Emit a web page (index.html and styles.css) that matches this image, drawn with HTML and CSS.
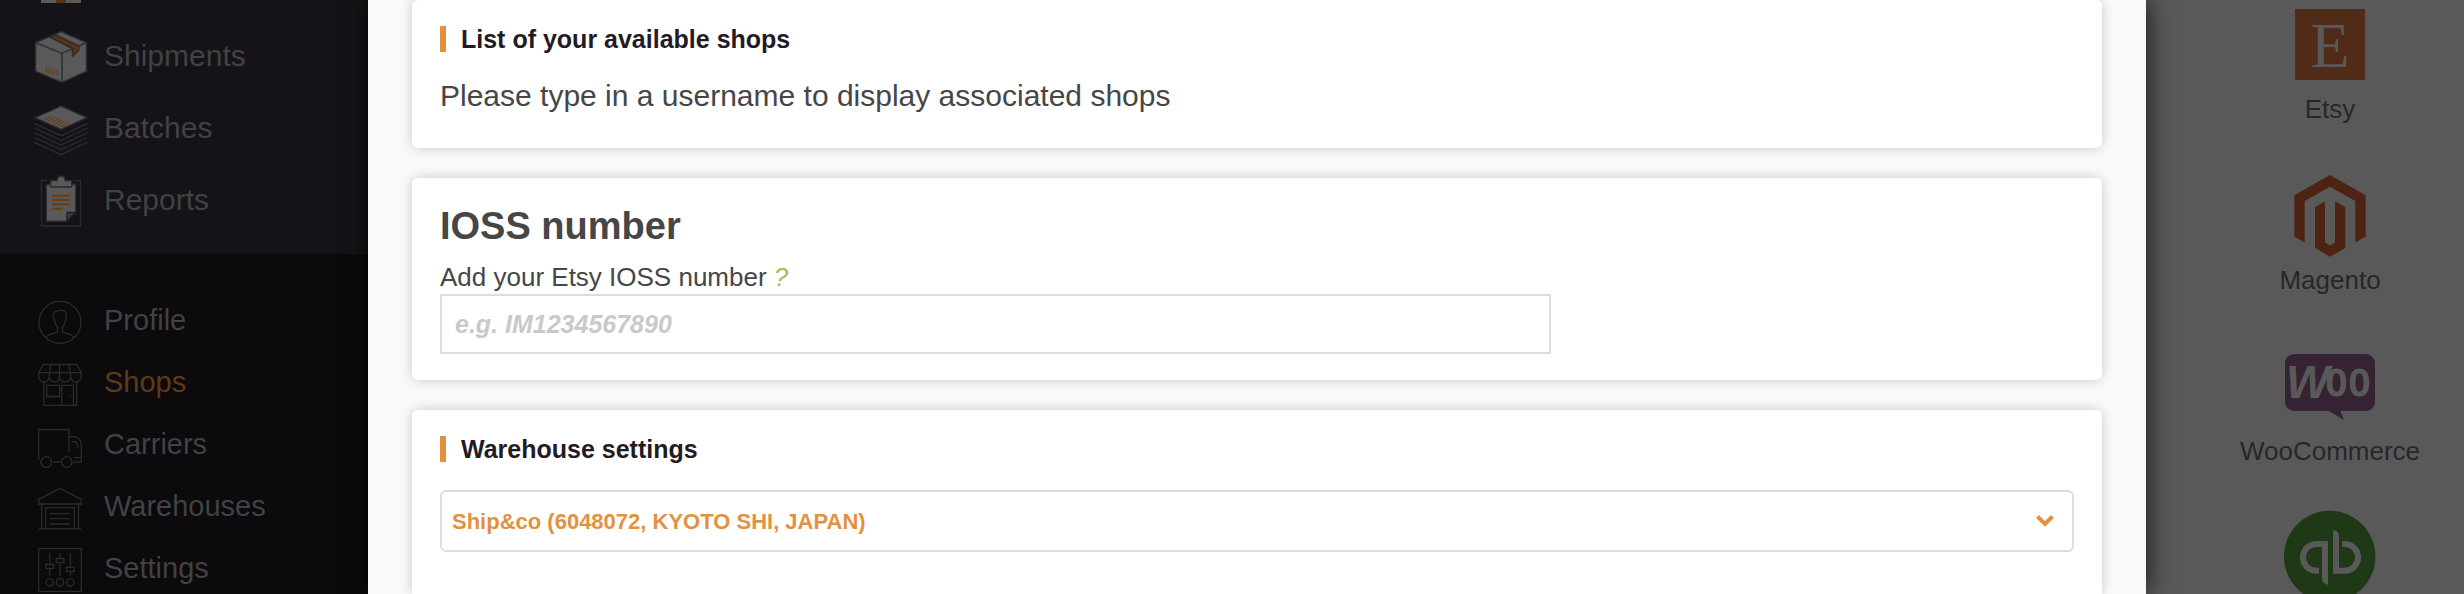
FILE: index.html
```html
<!DOCTYPE html>
<html lang="en">
<head>
  <meta charset="UTF-8">
  <title>Shops</title>
  <meta name="viewport" content="width=device-width, initial-scale=1.0">
  <link rel="stylesheet" href="styles.css">
</head>
<body>
  <div class="page">
    <nav class="sidebar">
      <div class="menu menu-main">
        <a href="#" class="menu-item menu-item-cut" aria-label="Orders">
          <svg class="icon" width="54" height="21" viewBox="0 0 54 21">
            <path class="paper" d="M7 0h40v3H7z"/>
            <path class="tape" d="M22 0h10v3H22z"/>
          </svg>
        </a>
        <a href="#" class="menu-item">
          <svg class="icon" width="54" height="54" viewBox="0 0 54 54">
            <path class="paper edge" d="M27 1.5 52.5 12.7V41.3L28 52.5 1.5 41.3V12.7z"/>
            <path class="edge" d="M1.5 12.7 28 23.3 52.5 12.7M28 23.3V52.5"/>
            <path class="tape edge" d="M16 7.2 21.500 4.8 45 16 44.5 21 38.5 26V18.5z"/>
            <path class="bars" d="M12.5 37v6M15 37.7v6M17.7 38.6v6M20.4 39.4v6M23.2 40v6"/>
          </svg>
          <span>Shipments</span>
        </a>
        <a href="#" class="menu-item">
          <svg class="icon" width="54" height="54" viewBox="0 0 54 54">
            <path class="line" d="M.5 21.3 27 33.7 53.5 21.3M.5 26 27 38.4 53.5 26M.5 30.7 27 43.1 53.5 30.7M.5 35.5 27 47.9 53.5 35.5M.5 40.3 27 52.7 53.5 40.3"/>
            <path class="paper edge" d="M27 4 53 15.7 27 27.5 1 15.7z"/>
            <path class="bars" d="M10.5 17.7 18 13.7M13.8 19.2l7.5-4M17.1 20.6l7.5-4M20.4 22.1l7.5-4M23.7 23.5l7.5-4M27.3 25l7.5-4"/>
          </svg>
          <span>Batches</span>
        </a>
        <a href="#" class="menu-item">
          <svg class="icon" width="54" height="54" viewBox="0 0 54 54">
            <path class="line" d="M13 6.5H7.5V52h39V6.5H41"/>
            <path class="paper edge" d="M12.3 10.5H41.7V38L33 47.3H12.3z"/>
            <path class="fold" d="M33 47.3V38.5H41.7z"/>
            <path class="paper edge" d="M16.7 6.5h6.5a4 4.5 0 0 1 8 0h6.5v6.5h-21z"/>
            <path class="bars rows" d="M18 21.7H36M18 26H36M18 30.3H36M18 34.7H28.7"/>
          </svg>
          <span>Reports</span>
        </a>
      </div>
      <div class="menu menu-account">
        <a href="#" class="menu-item">
          <svg class="icon" width="44" height="48" viewBox="0 0 44 48">
            <circle class="line" cx="22" cy="25.3" r="21"/>
            <path class="line" d="M7.7 40.3C11 37 16 36.5 19.5 35V30C17.5 28 16.8 25 16.5 22.5 15 21.5 15 20 15.7 19 14.5 15 17 14.5 18.5 14.3 21 13 25 13 27 14.5 29 15.500 28.5 18 28 19 29 20.5 28 22 27.5 22.5 27 26 26 28.500 24.3 30V35C28 36.5 33 37 36 40.3"/>
          </svg>
          <span>Profile</span>
        </a>
        <a href="#" class="menu-item active">
          <svg class="icon" width="44" height="48" viewBox="0 0 44 48">
            <path class="line" d="M5.5 5.5H38.5L43.3 13.7H.7zM13 5.5 11.3 13.7M21.5 5.5V13.7M30.5 5.5 32.5 13.7"/>
            <path class="line" d="M.7 13.7V17a5.3 5.5 0 0 0 10.6 1 5.1 5 0 0 0 10.2 0 5.4 5 0 0 0 11 0 5.4 5.5 0 0 0 10.8-1V13.7M11.3 13.7V18M21.5 13.7V18M32.5 13.7V18"/>
            <path class="line" d="M5.7 22V46.3H38.7V22M8.7 26.3H21.5V37.5H8.7zM23.7 46V26.3H35.5V46M32 37v1.5"/>
          </svg>
          <span>Shops</span>
        </a>
        <a href="#" class="menu-item">
          <svg class="icon" width="44" height="48" viewBox="0 0 44 48">
            <path class="line" d="M.7 39V8.5H31V31M31 15.7H35.5Q43.3 16 43.3 24V41H35.5M35.5 36.7H43M33.5 20.7H36Q39.7 21 39.7 27M15.3 41H22"/>
            <circle class="line" cx="8.3" cy="41" r="5.3"/>
            <circle class="line" cx="28.7" cy="41" r="5.3"/>
          </svg>
          <span>Carriers</span>
        </a>
        <a href="#" class="menu-item">
          <svg class="icon" width="44" height="48" viewBox="0 0 44 48">
            <path class="line" d="M22 5.3 43.3 16.3V21H.7V16.3zM3.7 21V45.7M40.5 21V45.7M1 45.7H43"/>
            <path class="line" d="M7.7 45.5V24.7H36.3V45.5M12 30.7H31.7M12 35.7H31.7M12 41H31.7"/>
          </svg>
          <span>Warehouses</span>
        </a>
        <a href="#" class="menu-item">
          <svg class="icon" width="44" height="48" viewBox="0 0 44 48">
            <rect class="line" x=".7" y="3.5" width="42.6" height="43"/>
            <path class="line" d="M11.7 8V19M11.7 23.5V30.7M22 8V13.5M22 17.5V30.7M32.3 8V22M32.3 26.5V30.7"/>
            <path class="line" d="M8 19.3h7.5v4H8zM18.3 13.5h7.5v4h-7.5zM28.6 22.3h7.5v4h-7.5z"/>
            <circle class="line" cx="11.7" cy="37.3" r="3.7"/>
            <circle class="line" cx="22" cy="37.3" r="3.7"/>
            <circle class="line" cx="32.3" cy="37.3" r="3.7"/>
          </svg>
          <span>Settings</span>
        </a>
      </div>
    </nav>

    <main class="modal">
      <section class="card">
        <h2 class="card-title">List of your available shops</h2>
        <p class="card-text">Please type in a username to display associated shops</p>
      </section>

      <section class="card">
        <h1 class="card-heading">IOSS number</h1>
        <label class="field-label" for="ioss">Add your Etsy IOSS number <em class="help">?</em></label>
        <input class="field-input" type="text" id="ioss" placeholder="e.g. IM1234567890">
      </section>

      <section class="card">
        <h2 class="card-title" id="warehouse-title">Warehouse settings</h2>
        <div class="select-box">
          <select class="select" aria-labelledby="warehouse-title">
            <option>Ship&amp;co (6048072, KYOTO SHI, JAPAN)</option>
          </select>
          <svg class="chevron" width="20" height="14" viewBox="0 0 20 14">
            <path d="M2.5 2.5 10 10 17.5 2.5"/>
          </svg>
        </div>
      </section>
    </main>

    <aside class="channels">
      <a href="#" class="channel">
        <svg class="logo" width="92" height="92" viewBox="0 0 92 92">
          <rect class="etsy" x="11" y="9" width="70" height="71"/>
          <text class="etsy-letter" x="46" y="67">E</text>
        </svg>
        <span>Etsy</span>
      </a>
      <a href="#" class="channel">
        <svg class="logo" width="92" height="92" viewBox="0 0 92 92">
          <path class="magento" d="M46 4 81.7 24.3V65.7L71.3 71.5V30L46 15.7 20.7 30V71.5L10.3 65.7V24.3z"/>
          <path class="magento" d="M31 36.3 41 30.3V71.3L46 74.5 51 71.3V30.3L61.3 36.3V77L46 85.7 31 77z"/>
        </svg>
        <span>Magento</span>
      </a>
      <a href="#" class="channel">
        <svg class="logo" width="92" height="92" viewBox="0 0 92 92">
          <rect class="woo" x="1" y="12" width="90" height="57" rx="9"/>
          <path class="woo" d="M44 68.5 59.7 77.7 56.3 68.5z"/>
          <text class="woo-letters" x="2" y="56">W<tspan class="woo-round" x="41" y="54">OO</tspan></text>
        </svg>
        <span>WooCommerce</span>
      </a>
      <a href="#" class="channel" aria-label="QuickBooks">
        <svg class="logo" width="92" height="92" viewBox="0 0 92 92">
          <circle class="qb" cx="45.7" cy="43.5" r="45.7"/>
          <path class="qb-ring" d="M35 57.7H32.3A13.35 13.35 0 0 1 32.3 31H41V62"/>
          <path class="qb-ring" d="M58.3 31H60.7A13.35 13.35 0 0 1 60.7 57.7H52V28"/>
          <path class="qb-end" d="M38 60V65.5Q38.5 71 44 71.7V60zM55 30V23Q54.5 17.5 49 17V30z"/>
        </svg>
      </a>
    </aside>
  </div>
</body>
</html>
```

FILE: styles.css
```css
* {
  box-sizing: border-box;
}
body {
  margin: 0;
  overflow: hidden;
  background: #595959;
  color: #464646;
  font-family: "Liberation Sans", Arial, Helvetica, sans-serif;
}
a {
  color: inherit;
  text-decoration: none;
}
.page {
  display: flex;
  height: 100vh;
}

/* sidebar */
.sidebar {
  display: flex;
  flex-direction: column;
  width: 368px;
  flex-shrink: 0;
  background: #0c0a0c;
  color: #404244;
}
.menu span {
  padding-bottom: 2px;
}
.menu-main {
  padding-bottom: 17px;
  background: #151317;
  font-size: 30px;
}
.menu-account {
  padding-top: 36px;
  font-size: 29px;
}
.menu-item {
  display: flex;
  align-items: center;
}
.menu-main .menu-item {
  height: 72px;
  padding-left: 34px;
  gap: 16px;
}
.menu-main .menu-item-cut {
  height: 21px;
}
.menu-account .menu-item {
  height: 62px;
  padding-left: 38px;
  gap: 22px;
}
.menu-item.active {
  color: #5f3a17;
}

/* menu icons */
.icon {
  flex-shrink: 0;
  fill: none;
}
.line {
  stroke: #2b2b2d;
  stroke-width: 1.3;
}
.paper {
  fill: #595959;
}
.edge {
  stroke: #2b2b31;
  stroke-width: 1.4;
}
.fold {
  fill: #3a3a3e;
  stroke: #1f1f23;
  stroke-width: 1.4;
}
.tape {
  fill: #5a3412;
}
.bars {
  stroke: #6a3d12;
  stroke-width: 1.2;
}
.rows {
  stroke-width: 2;
}

/* modal */
.modal {
  position: relative;
  display: flex;
  flex-direction: column;
  flex: 1;
  gap: 30px;
  padding: 0 44px;
  background: #f9f9f9;
  box-shadow: 0 0 24px rgba(0, 0, 0, 0.8);
}
.card {
  flex-shrink: 0;
  padding: 26px 28px;
  border-radius: 6px;
  background: #fff;
  box-shadow: 0 0 12px rgba(0, 0, 0, 0.2);
}
.card:last-child {
  flex: 1 0 auto;
  border-radius: 6px 6px 0 0;
}
.card-title {
  margin: 0 0 28px;
  padding-left: 15px;
  border-left: 6px solid #e3913f;
  color: #231b23;
  font-size: 25px;
  line-height: 26px;
}
.card-text {
  margin: 0 0 10px;
  font-size: 30px;
  line-height: 32px;
}
.card-heading {
  margin: 0 0 12px;
  font-size: 38px;
  line-height: 44px;
}
.field-label {
  display: block;
  font-size: 26px;
  line-height: 34px;
}
.help {
  color: #9dc155;
}
.field-input {
  display: block;
  width: 68%;
  height: 60px;
  padding: 0 13px;
  border: 2px solid #ddd;
  background: #fff;
  font: bold 25px "Liberation Sans", Arial, sans-serif;
}
.field-input::placeholder {
  color: #c9c9c9;
  font-style: italic;
}
.select-box {
  position: relative;
}
.select {
  display: block;
  width: 100%;
  height: 62px;
  padding: 0 10px;
  appearance: none;
  border: 2px solid #ddd;
  border-radius: 6px;
  background: #fff;
  color: #e3913f;
  font: bold 22px "Liberation Sans", Arial, sans-serif;
}
.chevron {
  position: absolute;
  top: 24px;
  right: 19px;
  fill: none;
  stroke: #e3913f;
  stroke-width: 4;
  pointer-events: none;
}

/* sales channels */
.channels {
  display: flex;
  flex-direction: column;
  gap: 47px;
  width: 318px;
  flex-shrink: 0;
  padding-left: 50px;
  color: #27272b;
}
.channel {
  display: flex;
  flex-direction: column;
  align-items: center;
  gap: 2px;
  font-size: 26px;
  line-height: 30px;
}
.logo {
  flex-shrink: 0;
  overflow: visible;
}
.etsy {
  fill: #502b17;
}
.etsy-letter {
  fill: #595959;
  font-family: "Liberation Serif", serif;
  font-size: 64px;
  text-anchor: middle;
}
.magento {
  fill: #4d2314;
}
.woo {
  fill: #352233;
}
.woo-letters {
  fill: #595959;
  font-size: 46px;
  font-style: italic;
  font-weight: bold;
}
.woo-round {
  font-family: "DejaVu Sans Mono", monospace;
  font-size: 38px;
  font-style: normal;
}
.qb {
  fill: #1f3816;
}
.qb-ring {
  fill: none;
  stroke: #595959;
  stroke-width: 6;
}
.qb-end {
  fill: #595959;
}
```
